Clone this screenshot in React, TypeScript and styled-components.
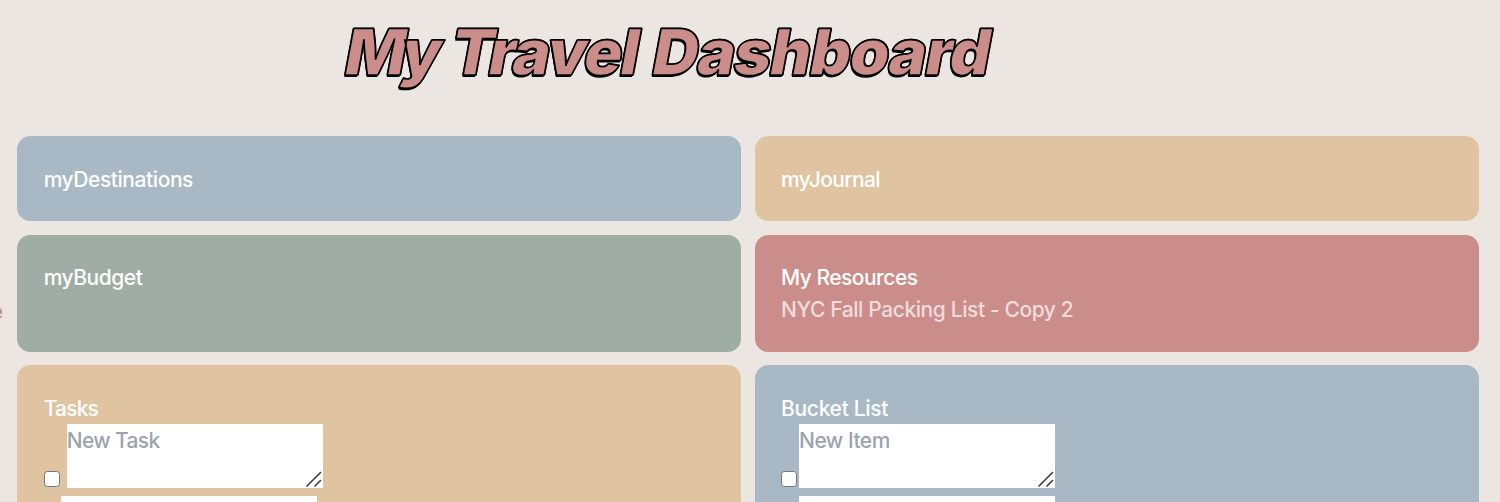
import React from "react";
import styled, { createGlobalStyle } from "styled-components";

const GlobalStyle = createGlobalStyle`
  *, *::before, *::after { box-sizing: border-box; }
  body {
    margin: 0;
    background: #ebe6e1;
    overflow: hidden;
    font-family: Inter, "Liberation Sans", sans-serif;
  }
`;

const colors = {
  blue: "#a8b9c5",
  sand: "#e0c3a0",
  sage: "#a0ada4",
  rose: "#ca8d8a",
};

const Page = styled.div`
  height: 502px;
  overflow: hidden;
  display: grid;
  grid-template-columns: 3px 1462px;
  grid-template-rows: 136px auto;
  column-gap: 14px;
`;

const Header = styled.header`
  grid-column: 1 / -1;
  padding: 20px 0 0 342px;
`;

const Title = styled.h1`
  margin: 0;
  width: max-content;
  font-size: 64px;
  line-height: 64px;
  font-weight: 900;
  white-space: nowrap;
  color: ${colors.rose};
  -webkit-text-stroke: 1.6px #000;
  text-shadow: 1px 0 0 #000, -1px 0 0 #000, 0 -1px 0 #000, 0 1px 0 #000, -0.5px 1.5px 0 #000;
  transform: skewX(-10.5deg);
  transform-origin: 0 55px;
`;

const Word = styled.span<{ $spacing: number; $lead?: number }>`
  margin-left: ${(p) => p.$lead ?? 0}px;
  letter-spacing: ${(p) => p.$spacing}px;
`;

const SideNav = styled.nav`
  display: flex;
  justify-content: flex-end;
  padding-top: 160px;
  font-size: 21px;
  font-weight: 500;
  line-height: 32px;
  color: ${colors.rose};
  overflow: hidden;
`;

const Cards = styled.main`
  display: grid;
  grid-template-columns: 724px 724px;
  grid-template-rows: 85px 117px 190px;
  column-gap: 14px;
  row-gap: 13.5px;
`;

const Card = styled.section<{ $color: string }>`
  background: ${(p) => p.$color};
  border-radius: 13.33px;
  padding: 27px 26.67px;
  color: #fff;
  &:nth-child(even) { padding-left: 26px; }
`;

const Label = styled.h2<{ $spacing: number; $drop?: number }>`
  margin: 0;
  padding-top: ${(p) => p.$drop ?? 0}px;
  width: max-content;
  height: 32px;
  font-size: 21px;
  font-weight: 500;
  line-height: 32px;
  letter-spacing: ${(p) => p.$spacing}px;
  white-space: nowrap;
`;

const ResourceLink = styled(Label).attrs({ as: "a" })`
  display: block;
  color: #f0dcdc;
`;

const Entry = styled.div<{ $gap: number }>`
  display: flex;
  align-items: flex-end;
  gap: ${(p) => p.$gap}px;
  margin-bottom: 8px;
`;

const Check = styled.input`
  appearance: none;
  flex: none;
  width: 16px;
  height: 16px;
  margin: 0 0 1px;
  background: #fff;
  border: 1.3px solid #767676;
  border-radius: 3.3px;
`;

const Field = styled.div`
  position: relative;
  width: 256px;
  height: 64px;
`;

const Area = styled.textarea<{ $spacing: number }>`
  display: block;
  width: 100%;
  height: 100%;
  padding: 1px 0 0;
  border: 0;
  outline: 0;
  resize: none;
  overflow: hidden;
  background: #fff;
  font: 450 21px/32px Inter, "Liberation Sans", sans-serif;
  letter-spacing: ${(p) => p.$spacing}px;
  &::placeholder { color: #9ca3af; opacity: 1; }
`;

const Grip = styled.svg`
  position: absolute;
  right: 0;
  bottom: 0;
  width: 18px;
  height: 18px;
`;

type EntryProps = { gap: number; placeholder?: string; spacing?: number };

const ListEntry = ({ gap, placeholder, spacing = 0 }: EntryProps) => (
  <Entry $gap={gap}>
    <Check type="checkbox" />
    <Field>
      <Area $spacing={spacing} placeholder={placeholder} />
      <Grip viewBox="0 0 18 18" fill="none" stroke="#404040" strokeWidth="1.6">
        <path d="M1.5 16.5 16 2M9.5 16.5l6.5-6.5" />
      </Grip>
    </Field>
  </Entry>
);

export default function App() {
  return (
    <>
      <GlobalStyle />
      <Page>
        <Header>
          <Title>
            <Word $spacing={-6}>My</Word>{" "}
            <Word $spacing={-2.4} $lead={2}>Travel</Word>{" "}
            <Word $spacing={-1.6} $lead={3.2}>Dashboard</Word>
          </Title>
        </Header>
        <SideNav>e</SideNav>
        <Cards>
          <Card $color={colors.blue}>
            <Label $spacing={-0.43} $drop={1}>myDestinations</Label>
          </Card>
          <Card $color={colors.sand}>
            <Label $spacing={-0.65} $drop={1}>myJournal</Label>
          </Card>
          <Card $color={colors.sage}>
            <Label $spacing={-0.45}>myBudget</Label>
          </Card>
          <Card $color={colors.rose}>
            <Label $spacing={-0.52}>My Resources</Label>
            <ResourceLink $spacing={-0.4}>NYC Fall Packing List - Copy 2</ResourceLink>
          </Card>
          <Card $color={colors.sand}>
            <Label $spacing={-0.8} $drop={1}>Tasks</Label>
            <ListEntry gap={7} placeholder="New Task" spacing={-0.65} />
            <ListEntry gap={1} />
          </Card>
          <Card $color={colors.blue}>
            <Label $spacing={-0.3} $drop={1}>Bucket List</Label>
            <ListEntry gap={2} placeholder="New Item" spacing={-0.5} />
            <ListEntry gap={2} />
          </Card>
        </Cards>
      </Page>
    </>
  );
}
